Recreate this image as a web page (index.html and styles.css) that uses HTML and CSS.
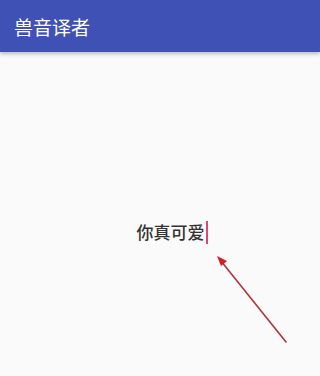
FILE: index.html
```html
<!DOCTYPE html>
<html lang="zh">
<head>
<meta charset="utf-8">
<link rel="stylesheet" href="styles.css">
</head>
<body>
<header class="appbar"><span class="title">兽音译者</span></header>
<main class="content">
  <div class="field"><span class="text">你真可爱</span><span class="cursor"></span></div>
  <svg class="arrow" width="320" height="376" viewBox="0 0 320 376">
    <line x1="286" y1="342" x2="221" y2="261" stroke="#b0323a" stroke-width="1.6" stroke-linecap="round"/>
    <polygon points="217,256 227,261 221,266" fill="#d21f26"/>
  </svg>
</main>
</body>
</html>
```
FILE: styles.css
```css
html, body { margin: 0; padding: 0; }
body {
  width: 320px; height: 376px; overflow: hidden;
  background: #fafafa;
  font-family: "Noto Sans CJK SC", "Noto Sans", sans-serif;
  position: relative;
}
.appbar {
  height: 52px;
  background: #3f51b5;
  display: flex; align-items: center;
  padding-left: 14px;
  box-shadow: 0 2px 4px rgba(0,0,0,0.25);
  position: relative; z-index: 1;
}
.title { color: #fff; font-size: 19px; line-height: 1; }
.content { height: 324px; }
.field {
  display: flex; align-items: center; justify-content: center;
  padding-top: 168px; padding-left: 24px;
}
.text { font-size: 17px; color: #333; line-height: 24px; font-weight: 500; }
.cursor { width: 2px; height: 23px; background: #e0457a; margin-left: 1px; }
.arrow { position: absolute; left: 0; top: 0; }
```
